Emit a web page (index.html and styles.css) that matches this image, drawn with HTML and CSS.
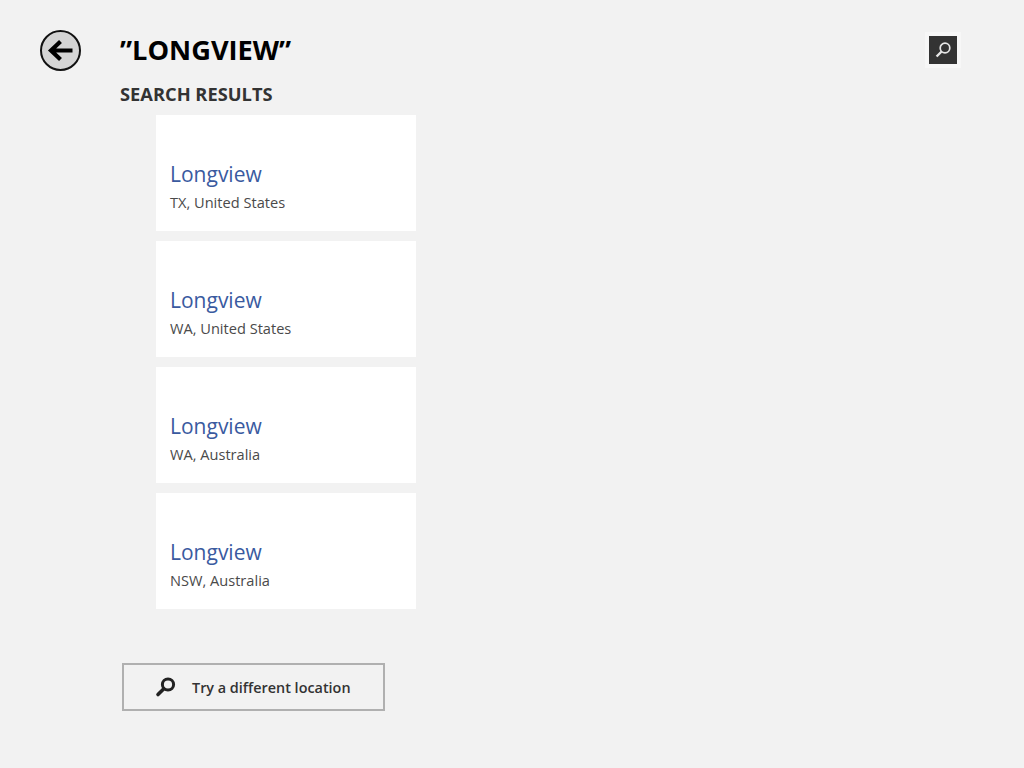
FILE: index.html
```html
<!DOCTYPE html>
<html lang="en">
<head>
<meta charset="utf-8">
<title>Search results</title>
<link rel="stylesheet" href="styles.css">
</head>
<body>
<div class="page">
  <header class="header">
    <button class="back" aria-label="Back">
      <svg width="41" height="41" viewBox="0 0 41 41"><circle cx="20.5" cy="20.5" r="19.5" fill="#d4d4d4" stroke="#111" stroke-width="2"/><path d="M32.5 20.5H12M20.5 11.5 11 20.5 20.5 29.5" fill="none" stroke="#000" stroke-width="4.2"/></svg>
    </button>
    <div class="heading">
      <h1 class="title">”LONGVIEW”</h1>
      <h2 class="subtitle">SEARCH RESULTS</h2>
    </div>
    <button class="search" aria-label="Search">
      <svg width="18" height="18" viewBox="0 0 18 18"><circle cx="11" cy="7" r="4.8" fill="none" stroke="#e6e6e6" stroke-width="1.7"/><path d="M7.6 10.5 2.6 15.5" fill="none" stroke="#e6e6e6" stroke-width="2.4"/></svg>
    </button>
  </header>
  <ul class="results">
    <li class="card"><div class="name">Longview</div><div class="place">TX, United States</div></li>
    <li class="card"><div class="name">Longview</div><div class="place">WA, United States</div></li>
    <li class="card"><div class="name">Longview</div><div class="place">WA, Australia</div></li>
    <li class="card"><div class="name">Longview</div><div class="place">NSW, Australia</div></li>
  </ul>
  <button class="different">
    <svg width="22" height="22" viewBox="0 0 22 22"><circle cx="13" cy="8.5" r="5.6" fill="none" stroke="#222" stroke-width="3"/><path d="M8.8 12.8 3 18.6" fill="none" stroke="#222" stroke-width="3.6" stroke-linecap="round"/></svg>
    <span>Try a different location</span>
  </button>
</div>
</body>
</html>
```
FILE: styles.css
```css
html, body {
  margin: 0;
  height: 100%;
  background: #f2f2f2;
}
.page {
  font-family: "Open Sans", "Noto Sans", sans-serif;
  padding: 30px 0 0 40px;
}
.header {
  display: flex;
  align-items: flex-start;
}
.back {
  width: 41px;
  height: 41px;
  padding: 0;
  border: 0;
  background: none;
  display: block;
}
.back svg { display: block; }
.heading {
  margin-left: 39px;
  width: 809px;
}
.title {
  margin: 0;
  font-size: 27.2px;
  line-height: 40px;
  font-weight: 700;
  color: #000;
}
.subtitle {
  margin: 9px 0 0;
  font-size: 18.3px;
  line-height: 30px;
  font-weight: 700;
  color: #333;
}
.search {
  width: 28px;
  height: 28px;
  margin-top: 6px;
  padding: 0;
  border: 0;
  background: #333;
  display: flex;
  align-items: center;
  justify-content: center;
  outline: 4px solid #f7f7f7;
}
.results {
  list-style: none;
  margin: 6px 0 0 116px;
  padding: 0;
  display: flex;
  flex-direction: column;
  gap: 10px;
}
.card {
  box-sizing: border-box;
  width: 260px;
  height: 116px;
  background: #fff;
  padding: 44px 14px 0;
}
.name {
  font-size: 21px;
  line-height: 30px;
  color: #3a5a9f;
}
.place {
  font-size: 14.6px;
  line-height: 20px;
  margin-top: 3px;
  color: #4a4a4a;
}
.different {
  box-sizing: border-box;
  margin: 54px 0 0 82px;
  width: 263px;
  height: 48px;
  border: 2px solid #b0b0b0;
  background: #f2f2f2;
  display: flex;
  align-items: center;
  padding: 0 0 0 31px;
  font-family: inherit;
  font-size: 14.4px;
  font-weight: 600;
  color: #333;
}
.different span { margin-left: 15px; }
```
